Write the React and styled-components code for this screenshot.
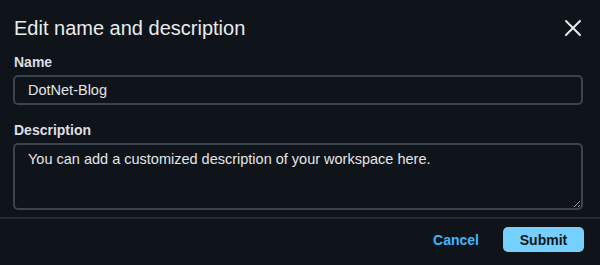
import styled, { createGlobalStyle } from 'styled-components';

const GlobalStyle = createGlobalStyle`
  html, body {
    margin: 0;
    padding: 0;
    background: #0f141a;
    color-scheme: dark;
  }
  * {
    box-sizing: border-box;
  }
`;

function CloseIcon() {
  return (
    <svg width="18" height="18" viewBox="0 0 18 18" fill="none">
      <path d="M2 2L16 16M16 2L2 16" stroke="#e9ebed" strokeWidth="2" strokeLinecap="round" />
    </svg>
  );
}

function App() {
  return (
    <>
      <GlobalStyle />
      <Modal>
        <Header>
          <Title>Edit name and description</Title>
          <CloseButton aria-label="Close">
            <CloseIcon />
          </CloseButton>
        </Header>
        <Body>
          <Field>
            <Label htmlFor="name">Name</Label>
            <TextInput id="name" defaultValue="DotNet-Blog" />
          </Field>
          <Field>
            <Label htmlFor="description">Description</Label>
            <TextArea
              id="description"
              defaultValue="You can add a customized description of your workspace here."
            />
          </Field>
        </Body>
        <Footer>
          <LinkButton>Cancel</LinkButton>
          <PrimaryButton>Submit</PrimaryButton>
        </Footer>
      </Modal>
    </>
  );
}

const Modal = styled.div`
  width: 600px;
  height: 265px;
  background: #0f141a;
  font-family: 'Liberation Sans', Arial, sans-serif;
  color: #e9ebed;
  display: flex;
  flex-direction: column;
`;

const Header = styled.div`
  display: flex;
  align-items: center;
  justify-content: space-between;
  padding: 16px 18px 0 14px;
`;

const Title = styled.h2`
  margin: 0;
  font-size: 20px;
  line-height: 24px;
  font-weight: 400;
  color: #e9ebed;
`;

const CloseButton = styled.button`
  display: flex;
  align-items: center;
  justify-content: center;
  padding: 0;
  border: none;
  background: none;
  cursor: pointer;
`;

const Body = styled.div`
  display: flex;
  flex-direction: column;
  gap: 16px;
  padding: 13px 17px 0 13px;
`;

const Field = styled.div`
  display: flex;
  flex-direction: column;
  gap: 4px;
`;

const Label = styled.label`
  padding-left: 1px;
  font-size: 14px;
  line-height: 18px;
  font-weight: 700;
  color: #dedee3;
`;

const TextInput = styled.input`
  width: 100%;
  height: 30px;
  padding: 0 13px;
  border: 2px solid #3b434d;
  border-radius: 5px;
  background: #0f141a;
  color: #e3e5e8;
  font-family: inherit;
  font-size: 14.5px;
  outline: none;
`;

const TextArea = styled.textarea`
  width: 100%;
  height: 67px;
  padding: 5px 13px;
  border: 2px solid #3b434d;
  border-radius: 5px;
  background: #0f141a;
  color: #e3e5e8;
  font-family: inherit;
  font-size: 14.5px;
  line-height: 18px;
  outline: none;
  resize: vertical;
`;

const Footer = styled.div`
  margin-top: 7px;
  border-top: 2px solid #262c34;
  display: flex;
  align-items: center;
  justify-content: flex-end;
  gap: 24px;
  padding: 8px 16px 0 0;
`;

const LinkButton = styled.button`
  border: none;
  background: none;
  padding: 0;
  font-family: inherit;
  font-size: 14px;
  font-weight: 700;
  color: #42b4ff;
  cursor: pointer;
`;

const PrimaryButton = styled.button`
  width: 81px;
  height: 25px;
  border: none;
  border-radius: 5px;
  background: #75cfff;
  color: #0f141a;
  font-family: inherit;
  font-size: 14px;
  font-weight: 700;
  cursor: pointer;
`;

export default App;
